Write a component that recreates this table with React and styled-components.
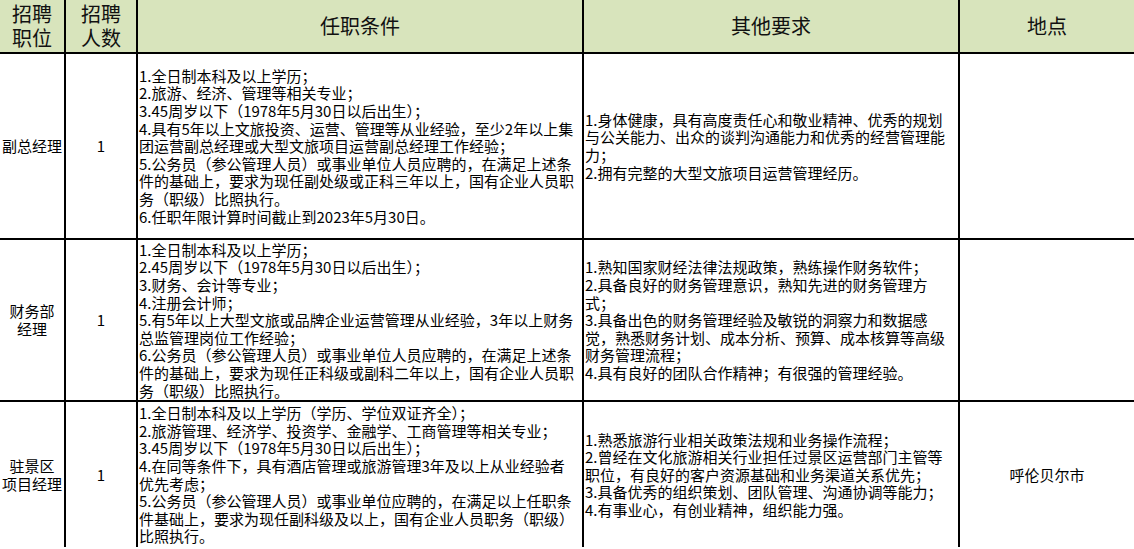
import React from "react";
import styled, { createGlobalStyle } from "styled-components";

const GlobalStyle = createGlobalStyle`
  html, body {
    margin: 0;
    padding: 0;
    background: #ffffff;
  }
  body {
    font-family: "Noto Sans CJK SC", "Noto Sans", sans-serif;
    color: #000000;
  }
`;

const rows = [
  {
    position: ["副总经理"],
    count: "1",
    height: 186,
    conditions: [
      "1.全日制本科及以上学历；",
      "2.旅游、经济、管理等相关专业；",
      "3.45周岁以下（1978年5月30日以后出生）；",
      "4.具有5年以上文旅投资、运营、管理等从业经验，至少2年以上集",
      "团运营副总经理或大型文旅项目运营副总经理工作经验；",
      "5.公务员（参公管理人员）或事业单位人员应聘的，在满足上述条",
      "件的基础上，要求为现任副处级或正科三年以上，国有企业人员职",
      "务（职级）比照执行。",
      "6.任职年限计算时间截止到2023年5月30日。",
    ],
    other: [
      "1.身体健康，具有高度责任心和敬业精神、优秀的规划",
      "与公关能力、出众的谈判沟通能力和优秀的经营管理能",
      "力；",
      "2.拥有完整的大型文旅项目运营管理经历。",
    ],
    location: "",
  },
  {
    position: ["财务部", "经理"],
    count: "1",
    height: 162,
    conditions: [
      "1.全日制本科及以上学历；",
      "2.45周岁以下（1978年5月30日以后出生）；",
      "3.财务、会计等专业；",
      "4.注册会计师；",
      "5.有5年以上大型文旅或品牌企业运营管理从业经验，3年以上财务",
      "总监管理岗位工作经验；",
      "6.公务员（参公管理人员）或事业单位人员应聘的，在满足上述条",
      "件的基础上，要求为现任正科级或副科二年以上，国有企业人员职",
      "务（职级）比照执行。",
    ],
    other: [
      "1.熟知国家财经法律法规政策，熟练操作财务软件；",
      "2.具备良好的财务管理意识，熟知先进的财务管理方",
      "式；",
      "3.具备出色的财务管理经验及敏锐的洞察力和数据感",
      "觉，熟悉财务计划、成本分析、预算、成本核算等高级",
      "财务管理流程；",
      "4.具有良好的团队合作精神；有很强的管理经验。",
    ],
    location: "",
  },
  {
    position: ["驻景区", "项目经理"],
    count: "1",
    height: 146,
    conditions: [
      "1.全日制本科及以上学历（学历、学位双证齐全）；",
      "2.旅游管理、经济学、投资学、金融学、工商管理等相关专业；",
      "3.45周岁以下（1978年5月30日以后出生）；",
      "4.在同等条件下，具有酒店管理或旅游管理3年及以上从业经验者",
      "优先考虑；",
      "5.公务员（参公管理人员）或事业单位应聘的，在满足以上任职条",
      "件基础上，要求为现任副科级及以上，国有企业人员职务（职级）",
      "比照执行。",
    ],
    other: [
      "1.熟悉旅游行业相关政策法规和业务操作流程；",
      "2.曾经在文化旅游相关行业担任过景区运营部门主管等",
      "职位，有良好的客户资源基础和业务渠道关系优先；",
      "3.具备优秀的组织策划、团队管理、沟通协调等能力；",
      "4.有事业心，有创业精神，组织能力强。",
    ],
    location: "呼伦贝尔市",
  },
];

export default function App() {
  return (
    <>
      <GlobalStyle />
      <Page>
        <Sheet>
          <colgroup>
            <col style={{ width: 65 }} />
            <col style={{ width: 72 }} />
            <col style={{ width: 446 }} />
            <col style={{ width: 376 }} />
            <col style={{ width: 175 }} />
          </colgroup>
          <thead>
            <HeadRow>
              <HeadCell>
                <Line>招聘</Line>
                <Line>职位</Line>
              </HeadCell>
              <HeadCell>
                <Line>招聘</Line>
                <Line>人数</Line>
              </HeadCell>
              <HeadCell>任职条件</HeadCell>
              <HeadCell>其他要求</HeadCell>
              <HeadCell>地点</HeadCell>
            </HeadRow>
          </thead>
          <tbody>
            {rows.map((row, i) => (
              <BodyRow key={i} $height={row.height}>
                <CenterCell>
                  {row.position.map((p) => (
                    <Line key={p}>{p}</Line>
                  ))}
                </CenterCell>
                <CenterCell>{row.count}</CenterCell>
                <TextCell>
                  {row.conditions.map((t, j) => (
                    <TextLine key={j}>{t}</TextLine>
                  ))}
                </TextCell>
                <TextCell>
                  {row.other.map((t, j) => (
                    <TextLine key={j}>{t}</TextLine>
                  ))}
                </TextCell>
                <CenterCell>{row.location}</CenterCell>
              </BodyRow>
            ))}
          </tbody>
        </Sheet>
      </Page>
    </>
  );
}

const Page = styled.div`
  width: 1134px;
  height: 549px;
  overflow: hidden;
  background: #ffffff;
`;

const Sheet = styled.table`
  width: 1134px;
  table-layout: fixed;
  border-collapse: collapse;
  border-style: hidden;
`;

const HeadRow = styled.tr`
  height: 53px;
  background: #d8e4bc;
`;

const BodyRow = styled.tr`
  height: ${(props) => props.$height}px;
`;

const HeadCell = styled.th`
  border: 2px solid #000000;
  padding: 0;
  font-size: 20px;
  font-weight: 400;
  line-height: 24px;
  text-align: center;
  vertical-align: middle;
  color: #111111;
`;

const CenterCell = styled.td`
  border: 2px solid #000000;
  padding: 0;
  font-size: 15px;
  line-height: 18px;
  text-align: center;
  vertical-align: middle;
`;

const TextCell = styled.td`
  border: 2px solid #000000;
  padding: 0 0 0 1px;
  font-size: 15px;
  line-height: 17.6px;
  text-align: left;
  vertical-align: middle;
  overflow: hidden;
`;

const Line = styled.div`
  white-space: nowrap;
`;

const TextLine = styled.div`
  white-space: nowrap;
`;
